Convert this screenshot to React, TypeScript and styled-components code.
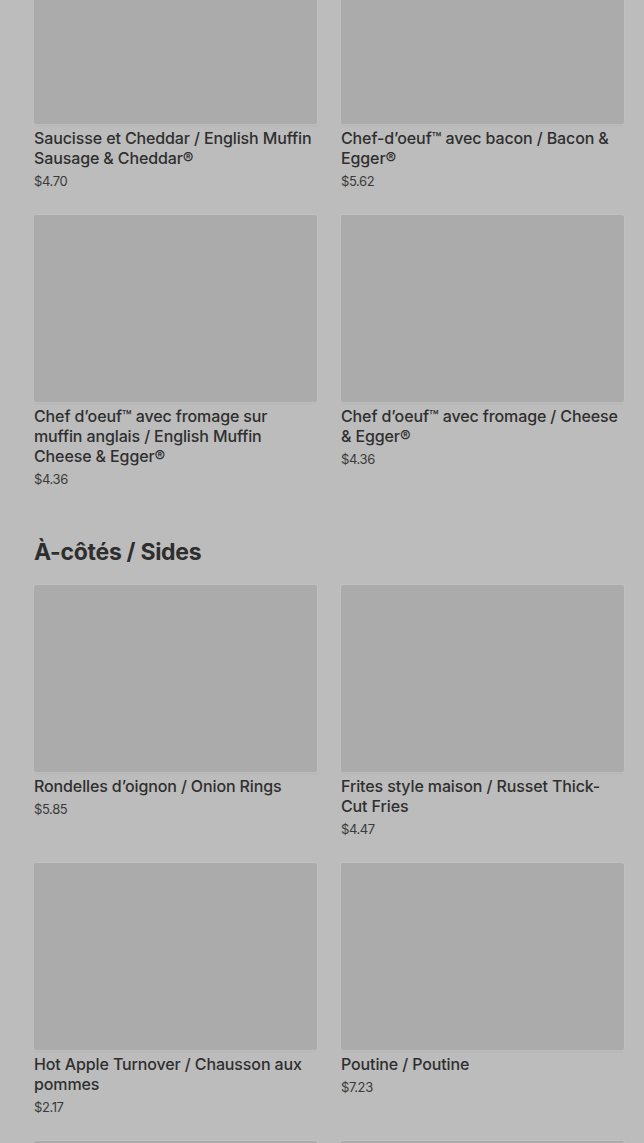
import React from 'react';
import styled, { createGlobalStyle } from 'styled-components';

const GlobalStyle = createGlobalStyle`
  html, body {
    margin: 0;
    padding: 0;
    background: #bcbcbc;
    overflow: hidden;
  }
  body {
    font-family: Inter, "Noto Sans", sans-serif;
    color: #2f2f2f;
  }
`;

const Page = styled.div`
  height: 1143px;
  overflow: hidden;
  background: #bcbcbc;
`;

const Content = styled.div`
  padding: 0 20px 0 34px;
  margin-top: -63px;
`;

const Section = styled.section`
  margin-bottom: 47px;
`;

const SectionTitle = styled.h2`
  margin: 0 0 17px;
  font-size: 23px;
  line-height: 32px;
  font-weight: 700;
  letter-spacing: -0.3px;
  color: #2e2e2e;
`;

const Grid = styled.div`
  display: grid;
  grid-template-columns: 1fr 1fr;
  column-gap: 24px;
  row-gap: 24px;
`;

const Card = styled.div`
  display: flex;
  flex-direction: column;
`;

const Thumb = styled.div`
  height: 187px;
  background: #ababab;
  border-radius: 2px;
  box-shadow: 0 0 0 1px rgba(255, 255, 255, 0.08), 0 2px 2px rgba(0, 0, 0, 0.03);
  margin-bottom: 4px;
`;

const Title = styled.div`
  font-size: 16px;
  line-height: 20px;
  font-weight: 500;
  letter-spacing: -0.12px;
  color: #2f2f2f;
`;

const Price = styled.div`
  margin-top: 3px;
  font-size: 13px;
  line-height: 20px;
  font-weight: 400;
  letter-spacing: -0.4px;
  color: #3a3a3a;
`;

type Item = { name: string; price: string };

const breakfast: Item[] = [
  { name: 'Saucisse et Cheddar / English Muffin Sausage & Cheddar®', price: '$4.70' },
  { name: 'Chef-d’oeuf™ avec bacon / Bacon & Egger®', price: '$5.62' },
  { name: 'Chef d’oeuf™ avec fromage sur muffin anglais / English Muffin Cheese & Egger®', price: '$4.36' },
  { name: 'Chef d’oeuf™ avec fromage / Cheese & Egger®', price: '$4.36' },
];

const sides: Item[] = [
  { name: 'Rondelles d’oignon / Onion Rings', price: '$5.85' },
  { name: 'Frites style maison / Russet Thick-Cut Fries', price: '$4.47' },
  { name: 'Hot Apple Turnover / Chausson aux pommes', price: '$2.17' },
  { name: 'Poutine / Poutine', price: '$7.23' },
  { name: '', price: '' },
  { name: '', price: '' },
];

const MenuCard: React.FC<{ item: Item }> = ({ item }) => (
  <Card>
    <Thumb />
    <Title>{item.name}</Title>
    <Price>{item.price}</Price>
  </Card>
);

export default function App() {
  return (
    <Page>
      <GlobalStyle />
      <Content>
        <Section>
          <Grid>
            {breakfast.map((it, i) => (
              <MenuCard key={i} item={it} />
            ))}
          </Grid>
        </Section>
        <Section>
          <SectionTitle>À-côtés / Sides</SectionTitle>
          <Grid>
            {sides.map((it, i) => (
              <MenuCard key={i} item={it} />
            ))}
          </Grid>
        </Section>
      </Content>
    </Page>
  );
}
